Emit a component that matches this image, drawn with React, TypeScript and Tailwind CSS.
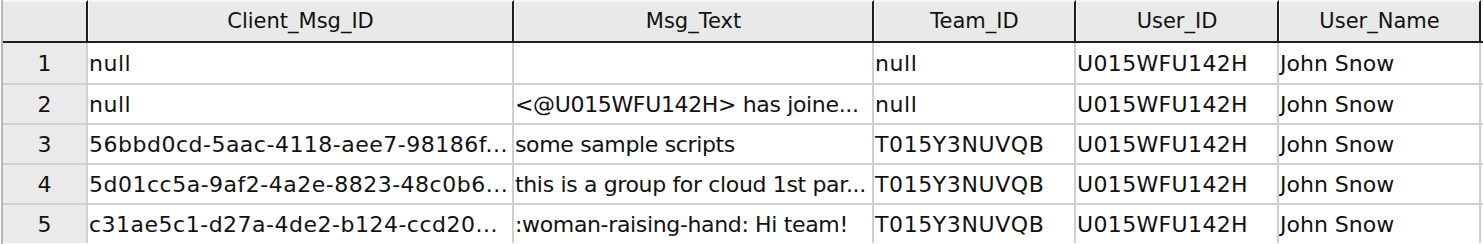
import React from 'react';

interface Row {
    clientMsgId: string;
    msgText: string;
    teamId: string;
    userId: string;
    userName: string;
}

const rows: Row[] = [
    { clientMsgId: 'null', msgText: '', teamId: 'null', userId: 'U015WFU142H', userName: 'John Snow' },
    { clientMsgId: 'null', msgText: '<@U015WFU142H> has joine...', teamId: 'null', userId: 'U015WFU142H', userName: 'John Snow' },
    { clientMsgId: '56bbd0cd-5aac-4118-aee7-98186f...', msgText: 'some sample scripts', teamId: 'T015Y3NUVQB', userId: 'U015WFU142H', userName: 'John Snow' },
    { clientMsgId: '5d01cc5a-9af2-4a2e-8823-48c0b6...', msgText: 'this is a group for cloud 1st par...', teamId: 'T015Y3NUVQB', userId: 'U015WFU142H', userName: 'John Snow' },
    { clientMsgId: 'c31ae5c1-d27a-4de2-b124-ccd20...', msgText: ':woman-raising-hand: Hi team!', teamId: 'T015Y3NUVQB', userId: 'U015WFU142H', userName: 'John Snow' },
];

const columns = [
    { title: 'Client_Msg_ID', width: 'w-[426px]' },
    { title: 'Msg_Text', width: 'w-[360px]' },
    { title: 'Team_ID', width: 'w-[202px]' },
    { title: 'User_ID', width: 'w-[203px]' },
    { title: 'User_Name', width: 'w-[202px]' },
];

export default function App() {
    return (
        <div
            className="w-[1483px] h-[244px] bg-white overflow-hidden text-[#111]"
            style={{ fontFamily: '"DejaVu Sans", "Liberation Sans", sans-serif' }}
        >
            <div className="ml-px border-l-2 border-[#b5b5b5] h-[244px]">
                {/* header */}
                <div className="flex h-[43px] border-b-2 border-[#1e1e1e]">
                    <div className="w-[85px] shrink-0 bg-[#e9e9e9] border-t-2 border-t-[#f7f7f7] border-r-2 border-r-[#1e1e1e]" />
                    {columns.map((c) => (
                        <div
                            key={c.title}
                            className={`${c.width} shrink-0 bg-[#e9e9e9] border-t-2 border-t-[#f7f7f7] border-l border-l-[#f7f7f7] border-r-2 border-r-[#1e1e1e] flex items-center justify-center text-[21px] leading-none`}
                        >
                            {c.title}
                        </div>
                    ))}
                </div>

                {/* body */}
                {rows.map((r, i) => (
                    <div
                        key={i}
                        className={i === 0 ? 'flex h-[40px]' : 'flex h-[40px] border-t-2 border-[#cfcfcf]'}
                    >
                        <div className="w-[85px] shrink-0 bg-[#eaeaea] border-r-2 border-[#cfcfcf] flex items-center justify-center pt-[2px] text-[22px] leading-none">
                            {i + 1}
                        </div>
                        <Cell width="w-[426px]" spacing="tracking-[0.5px]" text={r.clientMsgId} />
                        <Cell width="w-[360px]" spacing="tracking-[-0.35px]" text={r.msgText} />
                        <Cell width="w-[202px]" spacing="tracking-[0.6px]" text={r.teamId} />
                        <Cell width="w-[203px]" spacing="tracking-[0.35px]" text={r.userId} />
                        <Cell width="w-[202px]" spacing="tracking-normal" text={r.userName} />
                    </div>
                ))}
            </div>
        </div>
    );
}

function Cell({ width, spacing, text }: { width: string; spacing: string; text: string }) {
    return (
        <div className={`${width} ${spacing} shrink-0 border-r-2 border-[#cfcfcf] flex items-center pl-px pt-[2px] overflow-hidden whitespace-nowrap text-[22px] leading-none`}>
            {text}
        </div>
    );
}
